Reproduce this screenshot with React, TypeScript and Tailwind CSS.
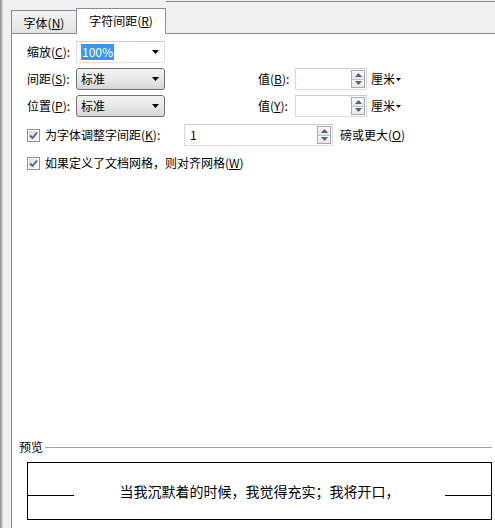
import type { ReactNode } from "react";

function Arrow() {
  return (
    <svg width="7" height="4" viewBox="0 0 7 4" className="shrink-0">
      <path d="M0 0H7L3.5 4Z" fill="#000" />
    </svg>
  );
}

function SmallArrow() {
  return (
    <svg width="5" height="3" viewBox="0 0 5 3" className="ml-px shrink-0">
      <path d="M0 0H5L2.5 3Z" fill="#000" />
    </svg>
  );
}

function Spinner() {
  return (
    <div className="flex h-[18px] w-[14px] shrink-0 flex-col border border-[#a9a9a9] bg-[#f4f4f4]">
      <div className="flex flex-1 items-center justify-center border-b border-[#c4c4c4] bg-linear-to-b from-[#fafafa] to-[#e6e6e6]">
        <svg width="7" height="4" viewBox="0 0 7 4">
          <path d="M0 4H7L3.5 0Z" fill="#4e6283" />
        </svg>
      </div>
      <div className="flex flex-1 items-center justify-center bg-linear-to-b from-[#fafafa] to-[#e6e6e6]">
        <svg width="7" height="4" viewBox="0 0 7 4">
          <path d="M0 0H7L3.5 4Z" fill="#4e6283" />
        </svg>
      </div>
    </div>
  );
}

function CheckBox() {
  return (
    <div className="flex h-[13px] w-[13px] shrink-0 items-center justify-center border border-[#8e8f8f] bg-white p-px">
      <div className="flex h-full w-full items-center justify-center bg-linear-to-br from-[#d9dadb] to-[#f8f8f8]">
        <svg width="9" height="9" viewBox="0 0 9 9">
          <path d="M1 4.5L3.5 7L8 1.5" fill="none" stroke="#4a5e8c" strokeWidth="1.8" />
        </svg>
      </div>
    </div>
  );
}

function NumberBox({ width, value }: { width: string; value?: string }) {
  return (
    <div
      className={`flex h-[22px] ${width} shrink-0 items-center border border-[#d6d9de] border-t-[#c7cbd1] bg-white pr-px pl-[5px]`}
    >
      <span className="flex-1">{value}</span>
      <Spinner />
    </div>
  );
}

function Label({ children, width }: { children: ReactNode; width: string }) {
  return <span className={`${width} shrink-0 whitespace-nowrap`}>{children}</span>;
}

function DropCombo() {
  return (
    <div className="flex h-[22px] w-[89px] shrink-0 items-center justify-between rounded-[3px] border border-[#707070] bg-linear-to-b from-[#f3f3f3] via-[#e8e8e8] to-[#d6d6d6] pr-[5px] pl-[4px]">
      <span>标准</span>
      <Arrow />
    </div>
  );
}

function ValueGroup({ label }: { label: ReactNode }) {
  return (
    <>
      <Label width="w-[37px] ml-[93px]">{label}</Label>
      <NumberBox width="w-[72px]" />
      <span className="ml-[4px] flex items-center">
        厘米
        <SmallArrow />
      </span>
    </>
  );
}

export default function App() {
  return (
    <div className="flex h-[528px] w-[495px] overflow-hidden bg-[#f0f0f0] font-['Noto_Sans_CJK_SC',sans-serif] text-[12px] leading-[16px] text-black">
      <div className="flex w-[11px] shrink-0">
        <div className="w-[3px] bg-linear-to-r from-[#8a8a8a] via-[#b5b5b5] to-[#dedede]" />
      </div>

      <div className="flex flex-1 flex-col">
        {/* tab strip */}
        <div className="flex h-[33px] items-end">
          <div className="flex h-[23px] w-[65px] items-center justify-center border-t border-l border-[#898c95] bg-linear-to-b from-[#f3f3f3] to-[#e3e3e3] pt-px">
            <span>
              字体(<u>N</u>)
            </span>
          </div>
          <div className="relative z-10 -mb-px flex h-[26px] w-[90px] items-center justify-center border border-b-0 border-[#898c95] bg-white pb-[2px]">
            <span>
              字符间距(<u>R</u>)
            </span>
          </div>
          <div className="mt-px flex-1 self-stretch border-t border-[#8a8a8a]" />
        </div>

        {/* page */}
        <div className="flex flex-1 flex-col border-t border-l border-[#898c95] bg-white">
          <div className="flex flex-col pt-[7px] pl-[15px]">
            <div className="flex h-[22px] items-center">
              <Label width="w-[49px]">
                缩放(<u>C</u>):
              </Label>
              <div className="flex h-[22px] w-[89px] shrink-0 items-center justify-between border border-[#dcdfe4] border-t-[#c9ccd2] bg-white pr-[5px] pl-[4px]">
                <span className="bg-[#3399ff] px-px text-white">100%</span>
                <Arrow />
              </div>
            </div>

            <div className="mt-[5px] flex h-[22px] items-center">
              <Label width="w-[49px]">
                间距(<u>S</u>):
              </Label>
              <DropCombo />
              <ValueGroup
                label={
                  <>
                    值(<u>B</u>):
                  </>
                }
              />
            </div>

            <div className="mt-[5px] flex h-[22px] items-center">
              <Label width="w-[49px]">
                位置(<u>P</u>):
              </Label>
              <DropCombo />
              <ValueGroup
                label={
                  <>
                    值(<u>Y</u>):
                  </>
                }
              />
            </div>

            <div className="mt-[7px] flex h-[22px] items-center">
              <CheckBox />
              <Label width="w-[139px] ml-[5px]">
                为字体调整字间距(<u>K</u>):
              </Label>
              <NumberBox width="w-[149px]" value="1" />
              <span className="ml-[7px]">
                磅或更大(<u>O</u>)
              </span>
            </div>

            <div className="mt-[6px] flex h-[22px] items-center">
              <CheckBox />
              <span className="ml-[5px]">
                如果定义了文档网格，则对齐网格(<u>W</u>)
              </span>
            </div>
          </div>

          <div className="flex-1" />

          {/* preview */}
          <div className="pr-[3px] pb-[8px]">
            <div className="flex h-[16px] items-center pl-[7px]">
              <span>预览</span>
              <div className="ml-[2px] h-px flex-1 bg-[#a0a0a0]" />
            </div>
            <div className="mt-[7px] ml-[15px] flex h-[58px] border border-black">
              <div className="mt-[32px] h-px w-[46px] self-start bg-black" />
              <div className="flex flex-1 items-center justify-center text-[14px]">
                当我沉默着的时候，我觉得充实；我将开口，
              </div>
              <div className="mt-[32px] h-px w-[46px] self-start bg-black" />
            </div>
          </div>
        </div>
      </div>
    </div>
  );
}
